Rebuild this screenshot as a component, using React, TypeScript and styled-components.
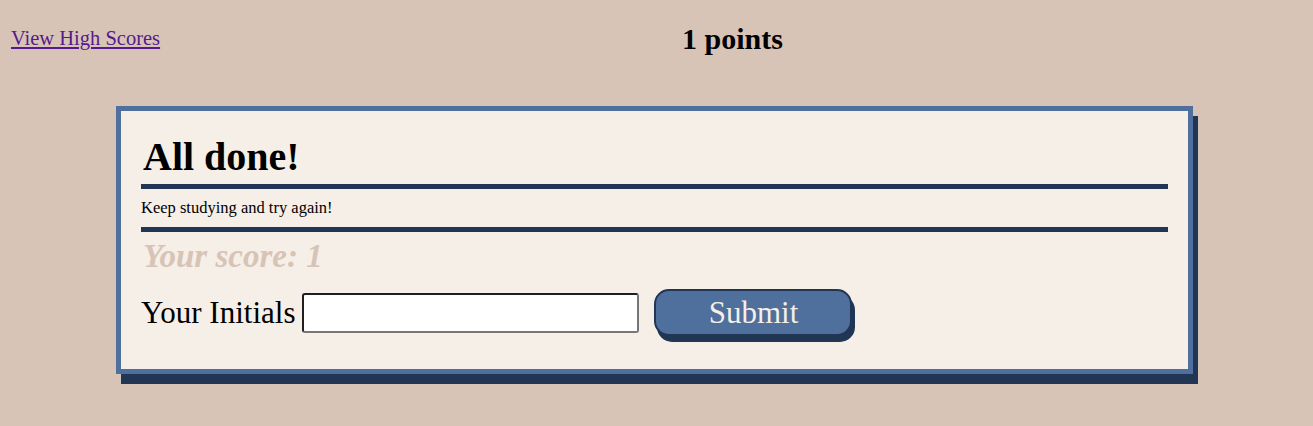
import React from "react";
import styled, { createGlobalStyle } from "styled-components";

const GlobalStyle = createGlobalStyle`
  html {
    background: #d8c4b6;
  }
  body {
    margin: 8px;
    min-height: 400px;
    background: #d8c4b6;
    font-family: "Liberation Serif", "Times New Roman", serif;
    color: #000;
  }
`;

const Header = styled.header`
  display: flex;
  justify-content: space-between;
  align-items: flex-start;
`;

const ScoresLink = styled.a`
  margin-top: 18px;
  padding-left: 3px;
  font-size: 20.5px;
  line-height: 24px;
  color: #551a8b;
  text-decoration: underline;
`;

const Points = styled.h2`
  margin: 13px 0 0;
  font-size: 30px;
  line-height: 36px;
  font-weight: bold;
`;

const Timer = styled.span`
  width: 0;
`;

const Card = styled.section`
  box-sizing: border-box;
  width: 1077px;
  margin: 49px 0 20px 108px;
  padding: 0 20px 33px;
  background: #f5efe7;
  border: 5px solid #4f709c;
  box-shadow: 5px 10px 0 #213555;
  display: flex;
  flex-direction: column;
`;

const Title = styled.h1`
  margin: 22px 0 0 2px;
  font-size: 40px;
  line-height: 48px;
  font-weight: bold;
`;

const Rule = styled.div<{ $gap: number }>`
  height: 5px;
  margin-top: ${(p) => p.$gap}px;
  background: #213555;
`;

const Message = styled.p`
  margin: 9px 0 0;
  font-size: 16.5px;
  line-height: 20px;
`;

const Score = styled.h3`
  margin: 6px 0 0 2px;
  font-size: 33px;
  line-height: 36px;
  font-weight: bold;
  font-style: italic;
  color: #d8c4b6;
`;

const FormRow = styled.form`
  margin-top: 15px;
  display: flex;
  align-items: center;
`;

const Label = styled.label`
  font-size: 31px;
  line-height: 34px;
`;

const Input = styled.input`
  box-sizing: border-box;
  width: 337px;
  height: 40px;
  margin-left: 7px;
  border: 2px solid #767676;
  border-top-color: #1f1f1f;
  border-left-color: #1f1f1f;
  border-radius: 3px;
  background: #fff;
  font-size: 20px;
  outline: none;
`;

const Submit = styled.button`
  box-sizing: border-box;
  width: 198px;
  height: 47px;
  margin-left: 15px;
  background: #4f709c;
  border: 2px solid #213555;
  border-radius: 15px;
  box-shadow: 3px 6px 0 #213555;
  color: #f5efe7;
  font-family: "Liberation Serif", "Times New Roman", serif;
  font-size: 31px;
  padding: 0;
  cursor: pointer;
`;

export default function App() {
  return (
    <>
      <GlobalStyle />
      <Header>
        <ScoresLink href="#">View High Scores</ScoresLink>
        <Points>1 points</Points>
        <Timer />
      </Header>
      <Card>
        <Title>All done!</Title>
        <Rule $gap={3} />
        <Message>Keep studying and try again!</Message>
        <Rule $gap={9} />
        <Score>Your score: 1</Score>
        <FormRow onSubmit={(e) => e.preventDefault()}>
          <Label htmlFor="initials">Your Initials</Label>
          <Input id="initials" type="text" />
          <Submit type="submit">Submit</Submit>
        </FormRow>
      </Card>
    </>
  );
}
